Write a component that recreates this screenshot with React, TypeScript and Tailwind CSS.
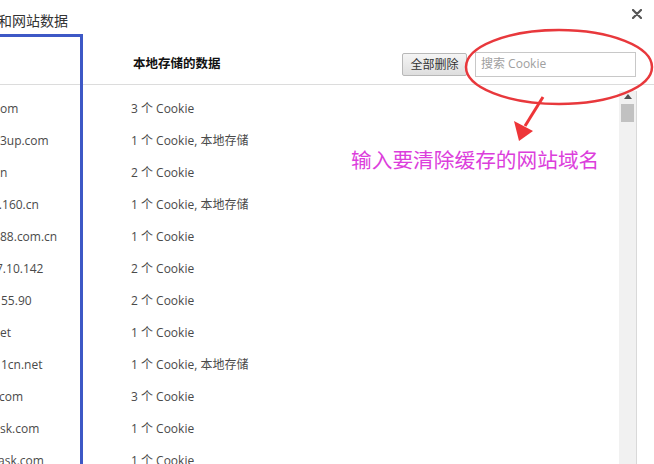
import React from "react";

const rows: { site: string; cls: string; data: string }[] = [
  { site: "om", cls: "ml-[0px]", data: "3 个 Cookie" },
  { site: "r3up.com", cls: "ml-[-5px]", data: "1 个 Cookie, 本地存储" },
  { site: "n", cls: "ml-[0px]", data: "2 个 Cookie" },
  { site: "3.160.cn", cls: "ml-[-8px]", data: "1 个 Cookie, 本地存储" },
  { site: "88.com.cn", cls: "ml-[0px]", data: "1 个 Cookie" },
  { site: "7.10.142", cls: "ml-[-4px]", data: "2 个 Cookie" },
  { site: "55.90", cls: "ml-[1px]", data: "2 个 Cookie" },
  { site: "et", cls: "ml-[0px]", data: "1 个 Cookie" },
  { site: "1cn.net", cls: "ml-[1px]", data: "1 个 Cookie, 本地存储" },
  { site: "com", cls: "ml-[-1px]", data: "3 个 Cookie" },
  { site: "sk.com", cls: "ml-[0px]", data: "1 个 Cookie" },
  { site: "ask.com", cls: "ml-[-2px]", data: "1 个 Cookie" },
];

export default function App() {
  return (
    <div className="relative w-[654px] h-[464px] overflow-hidden bg-white font-['Open_Sans','Noto_Sans_CJK_SC',sans-serif] text-[#4a4a4a]">
      {/* title */}
      <div className="h-[34px] flex items-start pt-[11px] relative">
        <div className="ml-[-2px] text-[14px] leading-[20px] text-[#333] whitespace-nowrap">
          和网站数据
        </div>
        <div className="absolute right-[12px] top-[9px]">
          <svg width="10" height="10" viewBox="0 0 10 10">
            <path d="M1 1 L9 9 M9 1 L1 9" stroke="#555" strokeWidth="2.2" strokeLinecap="round" />
          </svg>
        </div>
      </div>

      {/* header */}
      <div className="h-[51px] pt-[10px] flex items-center border-b border-[#dcdcdc]">
        <div className="w-[133px] shrink-0" />
        <div className="text-[12.5px] font-bold text-[#111] whitespace-nowrap">本地存储的数据</div>
        <div className="ml-auto flex items-center gap-[8px] mr-[18px]">
          <button className="h-[23px] w-[65px] text-[12px] text-[#333] rounded-[2px] border border-[#b8b8b8] bg-gradient-to-b from-[#f5f5f5] to-[#dedede] leading-[21px]">
            全部删除
          </button>
          <div className="h-[25px] w-[161px] border border-[#c8c8c8] bg-white flex items-center pl-[5px] text-[12px] text-[#a0a0a0]">
            搜索 Cookie
          </div>
        </div>
      </div>

      {/* list */}
      <div className="flex mt-[6px] h-[400px]">
        <div className="flex-1 flex flex-col pt-[2px]">
          {rows.map((r, i) => (
            <div key={i} className="h-[32px] shrink-0 flex items-center text-[12px]">
              <div className="w-[131px] shrink-0 overflow-hidden whitespace-nowrap">
                <span className={"inline-block " + r.cls}>{r.site}</span>
              </div>
              <div className="whitespace-nowrap">{r.data}</div>
            </div>
          ))}
        </div>
        <div className="w-[18px] mr-[17px] bg-[#f1f1f1] border-r border-[#d9d9d9] flex flex-col items-center pt-[2px]">
          <svg width="8" height="5" viewBox="0 0 8 5" className="mt-[1px]">
            <path d="M0 5 L4 0 L8 5 Z" fill="#505050" />
          </svg>
          <div className="mt-[5px] w-[13px] h-[18px] bg-[#c1c1c1]" />
        </div>
      </div>

      {/* annotations */}
      <div className="absolute left-[-10px] top-[34px] w-[93px] h-[500px] border-[3px] border-[#3d58c6]" />
      <svg className="absolute left-0 top-0 pointer-events-none" width="654" height="464">
        <ellipse cx="559" cy="67" rx="93" ry="37" fill="none" stroke="#e8383c" strokeWidth="2.5" />
        <path d="M543 97 L525 126" stroke="#ee3538" strokeWidth="3" />
        <path d="M519 141 L514 121 L533 131 Z" fill="#ee3538" />
      </svg>
      <div className="absolute left-[351px] top-[146px] text-[20.7px] leading-[26px] text-[#dc3edc] whitespace-nowrap font-['Noto_Sans_CJK_SC',sans-serif]">
        输入要清除缓存的网站域名
      </div>
    </div>
  );
}
